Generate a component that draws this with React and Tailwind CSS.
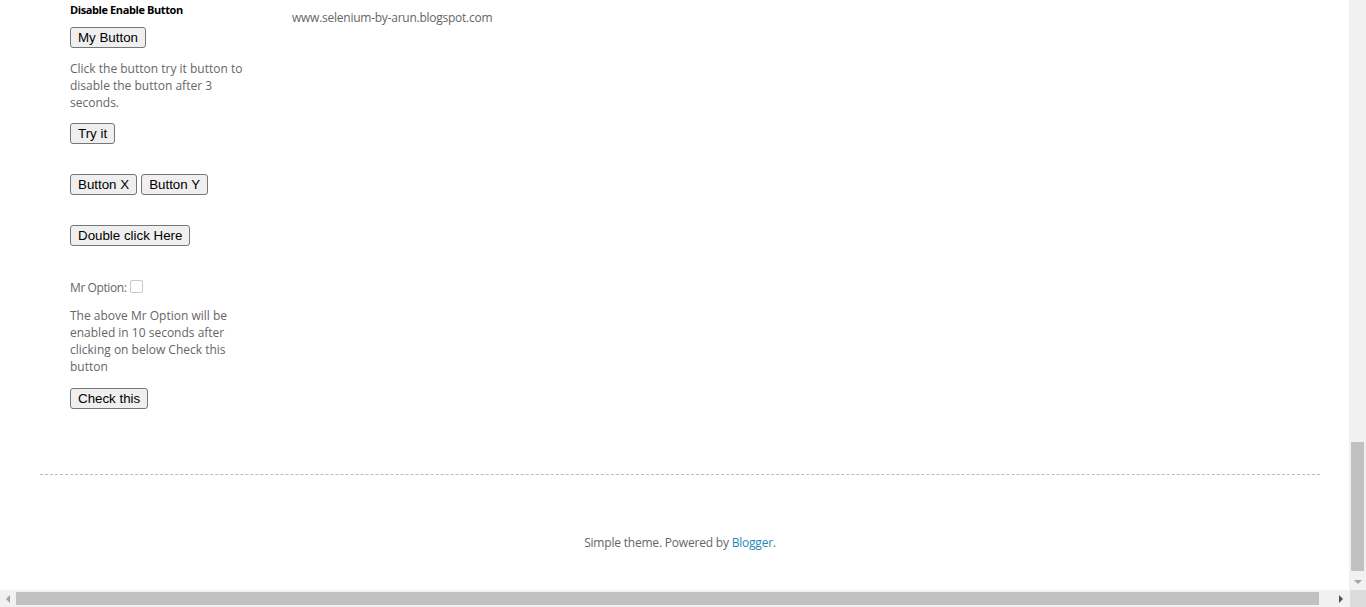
import React from "react";

const btn =
  "h-[21px] px-[7px] border border-[#767676] rounded-[3px] bg-[#efefef] text-black text-[13.33px] leading-[15px] [font-family:'Liberation_Sans',Arial,sans-serif]";

export default function App() {
  return (
    <div className="w-[1366px] h-[607px] overflow-hidden flex flex-col bg-white">
      <div className="flex flex-1 min-h-0">
        <div className="flex-1 relative [font-family:'Open_Sans','DejaVu_Sans',sans-serif] text-[#666666] text-[12px]">
          <div className="flex pl-[70px]">
            <div className="w-[180px] flex flex-col">
              <div className="pt-[3px] text-[11px] leading-[14px] font-bold text-black tracking-[-0.4px]">Disable Enable Button</div>
              <div className="mt-[10px]">
                <button className={btn}>My Button</button>
              </div>
              <p className="mt-[12px] leading-[17px]">Click the button try it button to disable the button after 3 seconds.</p>
              <div className="mt-[12px]">
                <button className={btn}>Try it</button>
              </div>
              <div className="mt-[30px] flex gap-[4px]">
                <button className={btn}>Button X</button>
                <button className={btn}>Button Y</button>
              </div>
              <div className="mt-[30px]">
                <button className={btn}>Double click Here</button>
              </div>
              <div className="mt-[34px] flex items-center h-[16px] leading-[16px]">
                <span className="tracking-[-0.4px]">Mr Option:</span>
                <span className="ml-[3px] -mt-[4px] w-[13px] h-[13px] border border-[#c8c8c8] rounded-[2px] bg-white inline-block"></span>
              </div>
              <p className="mt-[11px] leading-[17px]">The above Mr Option will be enabled in 10 seconds after clicking on below Check this button</p>
              <div className="mt-[13px]">
                <button className={btn}>Check this</button>
              </div>
            </div>
            <div className="ml-[42px] pt-[10px] leading-[15px] text-[12px] tracking-[-0.25px]">www.selenium-by-arun.blogspot.com</div>
          </div>
          <div className="ml-[40px] mr-[29px] mt-[65px] border-t border-dashed border-[#bbbbbb]"></div>
          <div className="ml-[40px] mr-[29px] mt-[60px] text-center leading-[15px] text-[12px] tracking-[-0.2px]">
            Simple theme. Powered by <span className="text-[#2288bb]">Blogger</span>.
          </div>
        </div>
        <div className="w-[17px] bg-[#f1f1f1] flex flex-col">
          <div className="flex-1 flex flex-col justify-end px-[2px]">
            <div className="h-[129px] bg-[#c1c1c1] mb-[2px]"></div>
          </div>
          <div className="h-[17px] flex items-center justify-center">
            <div className="w-0 h-0 border-l-[4px] border-r-[4px] border-t-[4px] border-l-transparent border-r-transparent border-t-[#a3a3a3]"></div>
          </div>
        </div>
      </div>
      <div className="h-[17px] flex bg-[#f1f1f1]">
        <div className="w-[17px] flex items-center justify-center">
          <div className="w-0 h-0 border-t-[4px] border-b-[4px] border-r-[4px] border-t-transparent border-b-transparent border-r-[#a3a3a3]"></div>
        </div>
        <div className="flex-1 flex items-center pr-[14px]">
          <div className="h-[13px] w-[1303px] bg-[#c1c1c1]"></div>
        </div>
        <div className="w-[17px] flex items-center justify-center">
          <div className="w-0 h-0 border-t-[4px] border-b-[4px] border-l-[4px] border-t-transparent border-b-transparent border-l-[#505050]"></div>
        </div>
        <div className="w-[17px] bg-[#dcdcdc]"></div>
      </div>
    </div>
  );
}
